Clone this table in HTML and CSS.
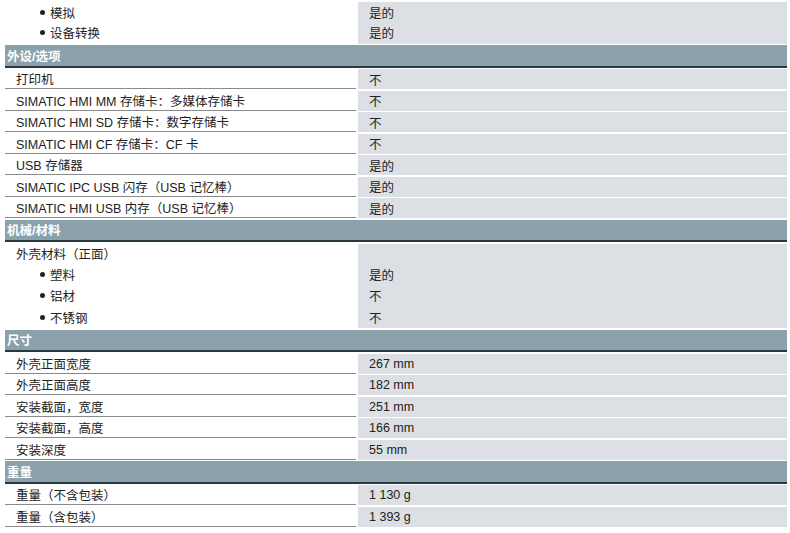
FILE: index.html
```html
<!DOCTYPE html>
<html lang="zh-CN">
<head>
<meta charset="utf-8">
<title>技术数据</title>
<link rel="stylesheet" href="styles.css">
</head>
<body>
<div class="sheet">
  <div class="row sub"><div class="k"><span class="dot"></span>模拟</div><div class="v">是的</div></div>
  <div class="row sub"><div class="k"><span class="dot"></span>设备转换</div><div class="v">是的</div></div>

  <div class="hdr">外设/选项</div>
  <div class="row"><div class="k">打印机</div><div class="v">不</div></div>
  <div class="row"><div class="k">SIMATIC HMI MM 存储卡：多媒体存储卡</div><div class="v">不</div></div>
  <div class="row"><div class="k">SIMATIC HMI SD 存储卡：数字存储卡</div><div class="v">不</div></div>
  <div class="row"><div class="k">SIMATIC HMI CF 存储卡：CF 卡</div><div class="v">不</div></div>
  <div class="row"><div class="k">USB 存储器</div><div class="v">是的</div></div>
  <div class="row"><div class="k">SIMATIC IPC USB 闪存（USB 记忆棒）</div><div class="v">是的</div></div>
  <div class="row"><div class="k">SIMATIC HMI USB 内存（USB 记忆棒）</div><div class="v">是的</div></div>

  <div class="hdr">机械/材料</div>
  <div class="row sub"><div class="k">外壳材料（正面）</div><div class="v"></div></div>
  <div class="row sub"><div class="k"><span class="dot"></span>塑料</div><div class="v">是的</div></div>
  <div class="row sub"><div class="k"><span class="dot"></span>铝材</div><div class="v">不</div></div>
  <div class="row sub"><div class="k"><span class="dot"></span>不锈钢</div><div class="v">不</div></div>

  <div class="hdr">尺寸</div>
  <div class="row"><div class="k">外壳正面宽度</div><div class="v">267 mm</div></div>
  <div class="row"><div class="k">外壳正面高度</div><div class="v">182 mm</div></div>
  <div class="row"><div class="k">安装截面，宽度</div><div class="v">251 mm</div></div>
  <div class="row"><div class="k">安装截面，高度</div><div class="v">166 mm</div></div>
  <div class="row"><div class="k">安装深度</div><div class="v">55 mm</div></div>

  <div class="hdr">重量</div>
  <div class="row"><div class="k">重量（不含包装）</div><div class="v">1 130 g</div></div>
  <div class="row"><div class="k">重量（含包装）</div><div class="v">1 393 g</div></div>
</div>
</body>
</html>
```

FILE: styles.css
```css
html, body {
  margin: 0;
  padding: 0;
  background: #ffffff;
}

body {
  font-family: "Liberation Sans", "Noto Sans CJK SC", sans-serif;
  font-size: 12.5px;
  color: #222222;
}

.sheet {
  display: flex;
  flex-direction: column;
  width: 782px;
  margin: 2px 0 0 5px;
}

.row {
  display: flex;
  height: 20px;
  margin-top: 1.5px;
}

.row.sub + .row.sub {
  margin-top: 0;
  height: 21.5px;
}

.sheet > .row:first-child {
  margin-top: 0;
}

.k {
  width: 351px;
  box-sizing: border-box;
  padding-left: 11px;
  display: flex;
  align-items: center;
  border-bottom: 1px solid #8a8a8a;
  white-space: nowrap;
}

.sub .k {
  border-bottom: none;
}

.v {
  flex: 1;
  margin-left: 2px;
  background: #dce0e4;
  padding-left: 11px;
  display: flex;
  align-items: center;
  white-space: nowrap;
}

.dot {
  display: inline-block;
  width: 5px;
  height: 5px;
  border-radius: 50%;
  background: #222222;
  margin: 0 5px 0 24px;
}

.hdr {
  margin-top: 1.5px;
  height: 20.5px;
  background: #8ba2ad;
  border-bottom: 2px solid #2a3840;
  color: #ffffff;
  font-weight: bold;
  padding-left: 2px;
  display: flex;
  align-items: center;
}
```
